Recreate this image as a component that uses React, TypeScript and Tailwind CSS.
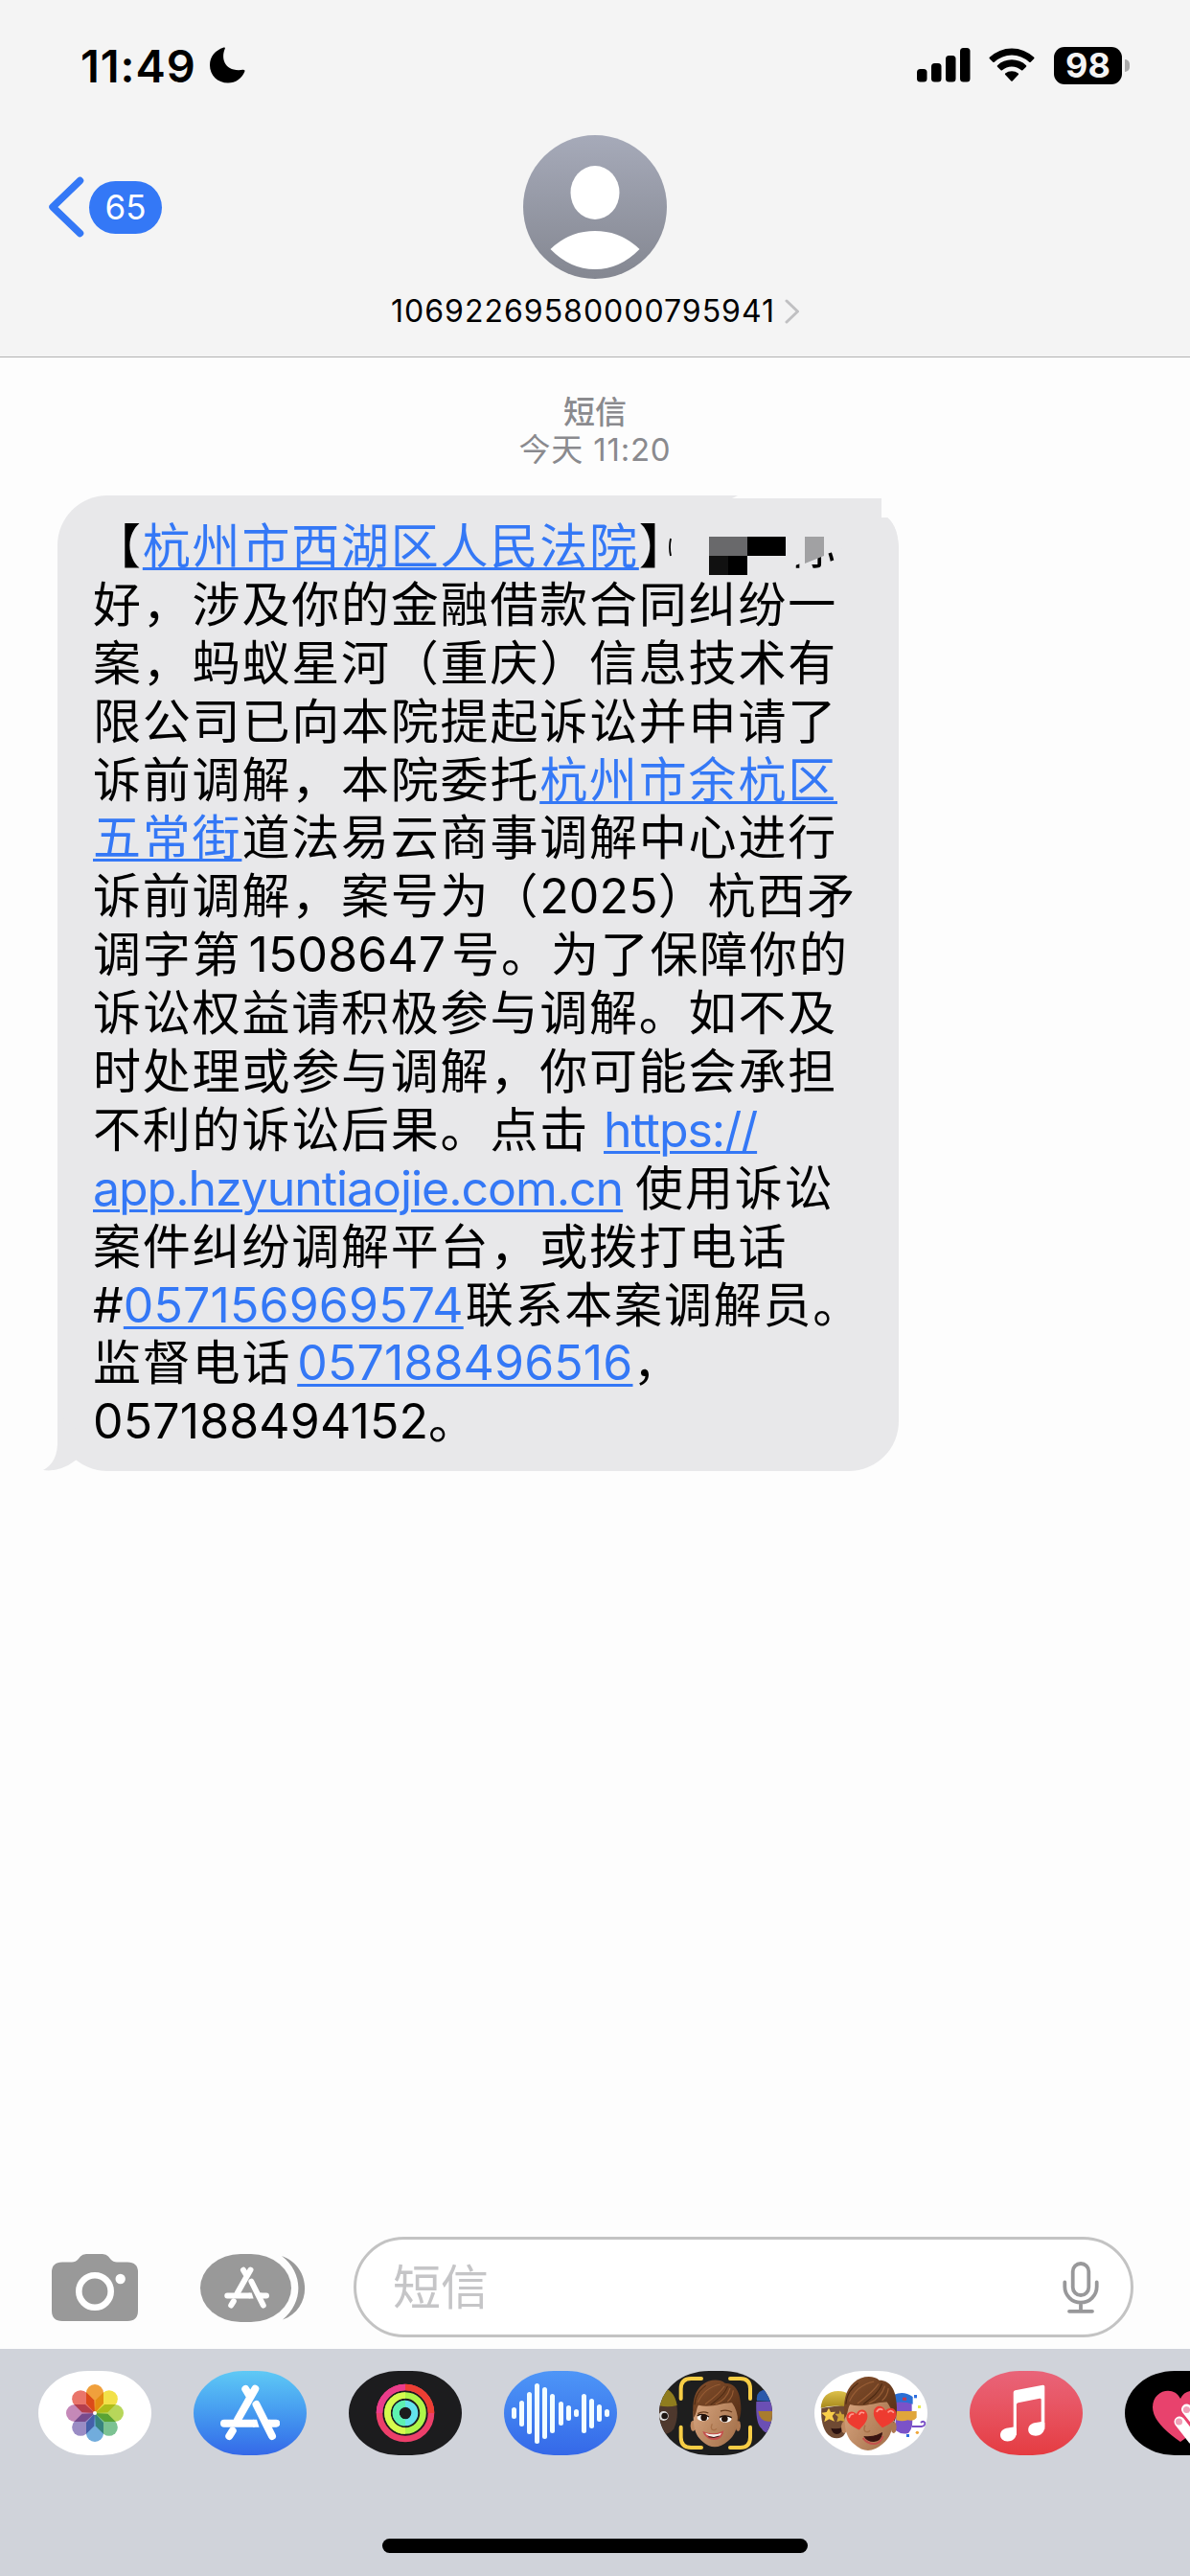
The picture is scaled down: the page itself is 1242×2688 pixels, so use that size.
import type { ReactNode } from "react";

type Segment = {
  text: string;
  kind?: "cjk" | "digits" | "url";
  link?: boolean;
  className?: string;
};

const tracking = {
  cjk: "tracking-[1.8px]",
  digits: "tracking-[0.15px]",
  url: "tracking-[-1.05px]",
};

const lines: Segment[][] = [
  [
    { text: "【" },
    { text: "杭州市西湖区人民法院", link: true },
    { text: "】" },
    { text: "你", className: "ml-[104px]" },
  ],
  [{ text: "好，涉及你的金融借款合同纠纷一" }],
  [{ text: "案，蚂蚁星河（重庆）信息技术有" }],
  [{ text: "限公司已向本院提起诉讼并申请了" }],
  [{ text: "诉前调解，本院委托" }, { text: "杭州市余杭区", link: true }],
  [{ text: "五常街", link: true }, { text: "道法易云商事调解中心进行" }],
  [
    { text: "诉前调解，案号为（" },
    { text: "2025", kind: "digits" },
    { text: "）杭西矛" },
  ],
  [
    { text: "调字第" },
    { text: "1508647", kind: "digits", className: "ml-[7px] mr-[6px]" },
    { text: "号。为了保障你的" },
  ],
  [{ text: "诉讼权益请积极参与调解。如不及" }],
  [{ text: "时处理或参与调解，你可能会承担" }],
  [
    { text: "不利的诉讼后果。点击" },
    { text: "https://", kind: "url", link: true, className: "ml-[15px]" },
  ],
  [
    { text: "app.hzyuntiaojie.com.cn", kind: "url", link: true },
    { text: "使用诉讼", className: "ml-[13px]" },
  ],
  [{ text: "案件纠纷调解平台，或拨打电话" }],
  [
    { text: "#", kind: "digits" },
    { text: "057156969574", kind: "digits", link: true },
    { text: "联系本案调解员。", className: "ml-[2px]" },
  ],
  [
    { text: "监督电话" },
    { text: "057188496516", kind: "digits", link: true, className: "ml-[6px]" },
    { text: "，" },
  ],
  [
    { text: "057188494152", kind: "digits" },
    { text: "。" },
  ],
];

const waveHeights = [12, 27, 44, 63, 54, 41, 25, 16, 8, 41, 31, 18, 8];

const petals = [
  "#f0a03c",
  "#f2e149",
  "#b7d65a",
  "#7cc292",
  "#71acdc",
  "#9a8cc4",
  "#c589b8",
  "#e9756a",
];

function StatusBar() {
  return (
    <div className="flex h-[136px] items-center justify-between pl-[84px] pr-[63px]">
      <div className="flex items-center">
        <span className="text-[47px] font-semibold leading-none tracking-[0.9px]">11:49</span>
        <svg className="ml-[14px] h-[38px] w-[37px]" viewBox="0 0 37 38">
          <path d="M14.5 0.6C15.6 0.2 16.2 1 15.7 2C11.2 12.500 16 26.500 34.500 23.800C36 23.600 36.800 24.500 36.300 25.800C33.500 33 27 37.500 19 37.500C8 37.500 0 29.500 0 19C0 10.500 5.500 3.500 14.500 0.600Z" />
        </svg>
      </div>
      <div className="flex items-center">
        <svg className="h-[36px] w-[56px]" viewBox="0 0 56 36">
          <rect x="0" y="22" width="10.500" height="13.500" rx="3.500" />
          <rect x="15" y="16" width="10.500" height="19.500" rx="3.500" />
          <rect x="30" y="8" width="10.500" height="27.500" rx="3.500" />
          <rect x="45" y="0" width="10.500" height="35.500" rx="3.500" />
        </svg>
        <svg className="ml-[19px] h-[36px] w-[48px]" viewBox="0 0 48 36">
          <path d="M0.800 9.800A33.500 33.500 0 0 1 47.200 9.800Q47.800 10.500 47.200 11.200L43.700 14.700Q43 15.300 42.200 14.700A26.800 26.800 0 0 0 5.800 14.700Q5 15.300 4.300 14.700L0.800 11.200Q0.200 10.500 0.800 9.800Z" />
          <path d="M9 18.200A22 22 0 0 1 39 18.200Q39.700 19 39 19.700L35.400 23.200Q34.700 23.800 34 23.200A15 15 0 0 0 14 23.200Q13.300 23.800 12.600 23.200L9 19.700Q8.300 19 9 18.200Z" />
          <path d="M17.200 26.600A11 11 0 0 1 30.800 26.600Q31.500 27.300 30.800 28L24.700 34.500Q24 35.200 23.300 34.500L17.200 28Q16.500 27.300 17.200 26.600Z" />
        </svg>
        <div className="ml-[20px] flex h-[39px] w-[71px] items-center justify-center rounded-[11px] bg-black text-[36px] font-bold leading-none text-[#f4f4f4]">
          98
        </div>
        <div className="ml-[3px] h-[13px] w-[5px] rounded-r-full bg-[#aaaaaa]" />
      </div>
    </div>
  );
}

function Avatar() {
  return (
    <svg className="size-[150px]" viewBox="0 0 150 150">
      <defs>
        <linearGradient id="avatar" x1="0" y1="0" x2="0" y2="1">
          <stop offset="0" stopColor="#a6aab9" />
          <stop offset="1" stopColor="#848791" />
        </linearGradient>
      </defs>
      <circle cx="75" cy="75" r="75" fill="url(#avatar)" />
      <ellipse cx="75" cy="60" rx="25.500" ry="28" fill="#fff" />
      <path d="M28.500 119Q48 100 75 100Q102 100 121.500 119Q101 140 75 140Q49 140 28.500 119Z" fill="#fff" />
    </svg>
  );
}

function Header() {
  return (
    <header className="h-[373px] border-b border-[#b2b2b2] bg-[#f4f4f4]">
      <StatusBar />
      <div className="grid grid-cols-3 pt-[5px]">
        <div className="flex h-[150px] items-center pl-[50px]">
          <svg className="h-[64px] w-[38px]" viewBox="0 0 38 64" fill="none">
            <path d="M33.500 4.500L5 32L33.500 59.500" stroke="#3478f6" strokeWidth="7.500" strokeLinecap="round" strokeLinejoin="round" />
          </svg>
          <span className="ml-[5px] flex h-[55px] w-[76px] items-center justify-center rounded-full bg-[#3478f6] text-[35px] leading-none text-white">
            65
          </span>
        </div>
        <div className="flex flex-col items-center">
          <Avatar />
          <div className="mt-[18px] flex items-center whitespace-nowrap pl-[1px]">
            <span className="text-[32px] leading-[32px] tracking-[1px]">10692269580000795941</span>
            <svg className="ml-[10px] h-[28px] w-[16px]" viewBox="0 0 16 28" fill="none">
              <path d="M2 3L13.500 14L2 25" stroke="#c0c0c2" strokeWidth="3" strokeLinecap="round" strokeLinejoin="round" />
            </svg>
          </div>
        </div>
      </div>
    </header>
  );
}

// Pixelated patch and smudge over the recipient's name
function Redaction() {
  return (
    <svg className="absolute left-[634px] top-[-10px] h-[124px] w-[254px]" viewBox="694 507 254 124">
      <path d="M764 520L772 516V507H948V640H938V575Q938 550 926 540H920V520Z" fill="#fdfdfd" />
      <path d="M764 520H920V540H926Q938 550 938 575V600H882V560H764Z" fill="#e8e8ea" />
      <path d="M701 530H880V572L830 590V606H701Z" fill="#e8e8ea" />
      <path d="M700 562Q698 571 700 580" stroke="#000" strokeWidth="1.800" fill="none" />
      <path d="M740 560H780V580H740Z" fill="#69696b" />
      <path d="M780 560H820V580H780Z" fill="#000" />
      <path d="M740 580H760V600H740Z" fill="#111" />
      <path d="M760 580H780V600H760Z" fill="#000" />
      <path d="M840 560H860V580L840 588Z" fill="#a1a1a3" />
    </svg>
  );
}

function Bubble() {
  return (
    <div className="relative ml-[60px] mt-[28px] h-[1017.5px] w-[878px] rounded-[52px] bg-[#e8e8ea] pl-[37px] pt-[23px]">
      <svg className="absolute bottom-0 left-[-16px] h-[60px] w-[40px]" viewBox="0 0 40 60">
        <path d="M16 0V32Q15 52 1 59Q19 61.500 36 48L40 20Z" fill="#e8e8ea" />
      </svg>
      {lines.map((line, i) => (
        <div key={i} className="flex h-[60.9px] items-baseline whitespace-nowrap text-[50px] leading-[61px]">
          {line.map((seg) => (
            <span key={seg.text} className={seg.className}>
              <span
                className={`${tracking[seg.kind ?? "cjk"]} ${
                  seg.link ? "text-[#3478f6] underline decoration-[3px] underline-offset-[4px]" : ""
                }`}
              >
                {seg.text}
              </span>
            </span>
          ))}
        </div>
      ))}
      <Redaction />
    </div>
  );
}

function StoreMark({ className }: { className: string }) {
  return (
    <svg className={className} viewBox="28 13 62 60" fill="none" stroke="#fff" strokeWidth="8" strokeLinecap="round">
      <path d="M54.300 18L58.500 25M64.300 17.700L46 50" />
      <path d="M32 53.700H62M80 53.700H86.300" />
      <path d="M62 49.700H66L68.500 57.700H62Z" fill="#fff" stroke="none" />
      <path d="M74 49.700H80V57.700H79Z" fill="#fff" stroke="none" />
      <path d="M65.500 34L82 67" />
      <path d="M40.700 61.500L37.300 67" />
    </svg>
  );
}

function InputBar() {
  return (
    <div className="flex h-[117px] items-start pl-[54px]">
      <svg className="mt-[18px] h-[70px] w-[90px]" viewBox="0 0 90 70">
        <path d="M11 8.500H21Q25 8.500 27.500 5.500L30 2.500Q32 0 36 0H53Q57 0 59 2.500L61.500 5.500Q64 8.500 68 8.500H79Q90 8.500 90 19V59Q90 70 79 70H11Q0 70 0 59V19Q0 8.500 11 8.500Z" fill="#999" />
        <circle cx="45" cy="39" r="16.700" fill="none" stroke="#fff" strokeWidth="6.600" />
        <circle cx="71.700" cy="26" r="5.200" fill="#fff" />
      </svg>
      <div className="ml-[65px] mt-[18px] flex">
        <div className="flex h-[71px] w-[95px] items-center justify-center rounded-[42px/35.5px] bg-[#999]">
          <StoreMark className="ml-[1px] h-[45px] w-[47px]" />
        </div>
        <svg className="ml-[-10px] h-[71px] w-[25px]" viewBox="0 0 25 71">
          <path d="M0 2C32 13 32 58 1 68.500C23 50 23 20 0 2Z" fill="#999" />
        </svg>
      </div>
      <div className="ml-[50px] flex h-[105px] w-[814px] items-center justify-between rounded-full border-[3px] border-[#c3c3c3] bg-white pl-[38px] pr-[33px]">
        <span className="text-[50px] leading-none text-[#c5c5c7]">短信</span>
        <svg className="h-[54px] w-[38px]" viewBox="0 0 38 54" fill="none" stroke="#98989a" strokeWidth="3.800" strokeLinecap="round">
          <rect x="10.700" y="2" width="16.600" height="33" rx="8.300" />
          <path d="M2.300 21.500V26A16.700 16.700 0 0 0 35.700 26V21.500M19 43V51.500M7 51.800H31" />
        </svg>
      </div>
    </div>
  );
}

function AppPill({ className, children }: { className?: string; children: ReactNode }) {
  return (
    <div className={`flex h-[88px] w-[118px] shrink-0 items-center justify-center overflow-hidden rounded-[52px/44px] ${className ?? ""}`}>
      {children}
    </div>
  );
}

function PhotosIcon() {
  return (
    <svg className="size-[64px] isolate" viewBox="-32 -32 64 64">
      {petals.map((color, i) => (
        <path
          key={color}
          d="M0 0L-9 -10V-21A9 9 0 0 1 9 -21V-10Z"
          fill={color}
          transform={`rotate(${i * 45})`}
          className="mix-blend-multiply"
        />
      ))}
      <circle r="2" fill="#fff" />
    </svg>
  );
}

function RingsIcon() {
  return (
    <svg className="size-[62px]" viewBox="-31 -31 62 62" fill="none">
      <circle r="27" stroke="#ec3f6a" strokeWidth="6.600" />
      <path d="M0 -27A27 27 0 0 0 -27 0" stroke="#ea3c8b" strokeWidth="6.600" />
      <path d="M0 -27A27 27 0 0 1 27 0" stroke="#ec3f33" strokeWidth="6.600" />
      <circle r="18.500" stroke="#aef649" strokeWidth="6.600" />
      <path d="M0 -18.500A18.500 18.500 0 0 0 0 18.500" stroke="#d6fb4e" strokeWidth="6.600" />
      <circle r="9.800" stroke="#63e3ec" strokeWidth="7" />
      <path d="M0 -9.800A9.800 9.800 0 0 0 0 9.800" stroke="#5df2b0" strokeWidth="7" />
    </svg>
  );
}

function HairAndFace() {
  return (
    <>
      <ellipse cx="130" cy="196" rx="8" ry="17" fill="#c08a62" />
      <ellipse cx="271" cy="196" rx="8" ry="17" fill="#ad7750" />
      <path d="M131 150C130 195 134 225 160 245Q198 280 240 243C268 220 271 190 270 140Q230 90 160 110Z" fill="url(#skin)" />
      <path d="M131 172C127 125 132 90 158 68C180 48 215 48 230 62C262 62 275 90 278 118C283 150 278 170 271 184C270 160 264 140 252 124C225 122 185 142 147 131C140 140 142 158 131 172Z" fill="url(#hair)" />
      <path d="M145 122C160 90 185 72 215 66M168 128C190 112 215 92 228 72M200 128C225 118 240 98 246 78M238 120C250 110 255 95 256 85" stroke="#965c34" strokeWidth="3.500" fill="none" />
      <path d="M135 130C138 100 150 85 170 70M185 130C212 110 230 95 238 72" stroke="#4a2811" strokeWidth="3" fill="none" />
      <path d="M190 190Q183 206 193 209Q202 210 203 204" stroke="#a87149" strokeWidth="4" fill="none" />
    </>
  );
}

function FaceGradients() {
  return (
    <defs>
      <linearGradient id="skin" x1="0" y1="0" x2="1" y2="0.6">
        <stop offset="0" stopColor="#d9a680" />
        <stop offset="1" stopColor="#a8754f" />
      </linearGradient>
      <linearGradient id="hair" x1="0" y1="0" x2="1" y2="1">
        <stop offset="0" stopColor="#85502c" />
        <stop offset="1" stopColor="#552e16" />
      </linearGradient>
      <linearGradient id="hat" x1="0" y1="0" x2="0" y2="1">
        <stop offset="0" stopColor="#dcc04a" />
        <stop offset="1" stopColor="#a8891c" />
      </linearGradient>
    </defs>
  );
}

function MemojiIcon() {
  return (
    <svg className="h-[88px] w-[118px]" viewBox="24 24 354 264">
      <FaceGradients />
      <path d="M20 125H78Q86 170 70 205Q58 225 20 225Z" fill="#4e382d" />
      <path d="M20 75Q70 75 80 132Q50 140 20 132Z" fill="#8f7c1e" />
      <circle cx="38" cy="165" r="15" fill="#ddd" />
      <circle cx="41" cy="165" r="10" fill="#1c1410" />
      <path d="M328 120Q325 190 345 205Q350 220 380 220V120Z" fill="#6b4fb4" />
      <path d="M330 118Q325 85 360 82H380V120Z" fill="#2a59ab" />
      <path d="M334 150H380V180Q340 190 334 150Z" fill="#a87c2e" />
      <path d="M92 111V80Q92 48 124 48H156M246 48H278Q309 48 309 80V111M309 200V232Q309 264 278 264H246M156 264H124Q92 264 92 232V200" stroke="#f7cd45" strokeWidth="12" strokeLinecap="round" fill="none" />
      <HairAndFace />
      <path d="M145 158Q160 148 178 156M216 150Q235 144 252 153" stroke="#6a3d1e" strokeWidth="4" fill="none" />
      <ellipse cx="161" cy="171" rx="18" ry="10" fill="#fff" />
      <ellipse cx="232" cy="175" rx="18" ry="10" fill="#fff" />
      <circle cx="164" cy="170" r="10" fill="#24130b" />
      <circle cx="229" cy="174" r="10" fill="#24130b" />
      <path d="M143 164Q161 155 180 168M213 169Q232 160 251 170" stroke="#1c0e08" strokeWidth="4" fill="none" />
      <path d="M160 213Q195 228 226 211Q222 240 195 240Q168 238 160 213Z" fill="#c5504d" />
      <path d="M168 218Q195 228 219 218Q214 232 195 232Q176 230 168 218Z" fill="#f4eee8" />
      <path d="M178 230Q195 236 212 228" stroke="#3a1512" strokeWidth="3" fill="none" />
    </svg>
  );
}

function Heart({ transform }: { transform: string }) {
  return (
    <g transform={transform}>
      <path d="M0 32C-16 20 -33 8 -33 -10C-33 -30 -10 -36 0 -18C10 -36 33 -30 33 -10C33 8 16 20 0 32Z" fill="#ee3b30" />
      <path d="M-24 -12Q-20 -23 -10 -20M9 -16Q14 -24 23 -18" stroke="#ff9b8f" strokeWidth="5" strokeLinecap="round" fill="none" />
    </g>
  );
}

function StickersIcon() {
  return (
    <svg className="h-[88px] w-[118px]" viewBox="510 24 354 264">
      <path d="M532 140C528 190 545 235 580 235C600 235 612 220 612 190V130Z" fill="#6f4a33" />
      <path d="M530 140Q534 88 585 87Q605 87 612 95V135Q570 130 530 140Z" fill="url(#hat)" />
      <path d="M555 140L561 153L576 152L566 165L573 182L556 175L541 184L545 167L532 155L548 153Z" fill="#f9cf4b" />
      <path d="M590 148L596 160L610 160L602 171L607 184L592 179L580 184L584 168L574 158L587 158Z" fill="#cda436" />
      <path d="M562 203Q580 208 598 201Q596 222 580 222Q566 220 562 203Z" fill="#2a1210" />
      <path d="M764 115H815V165Q822 200 805 218Q785 226 764 210Z" fill="#7b52c8" />
      <path d="M760 98Q790 85 818 105V128Q790 118 760 124Z" fill="#2b6fd4" />
      <path d="M766 150H830V170Q822 182 802 178Q785 184 766 178Z" fill="#e0a63b" />
      <path d="M786 112H798" stroke="#c33750" strokeWidth="9" />
      <path d="M815 198H845Q858 196 856 186Q850 178 843 186" stroke="#7a4fc6" strokeWidth="6" fill="none" />
      <rect x="822" y="99" width="9" height="10" fill="#2f6fe0" />
      <rect x="834" y="132" width="9" height="9" fill="#e8ea4e" />
      <rect x="798" y="222" width="9" height="9" fill="#2f6fe0" />
      <circle cx="832" cy="217" r="5" fill="#f0a63a" />
      <g transform="translate(460 -15) scale(1.100)">
        <HairAndFace />
      </g>
      <path d="M664 228Q695 232 723 216Q722 244 696 246Q674 246 664 228Z" fill="#3a1411" />
      <path d="M662 234Q680 256 704 251Q720 246 724 228" stroke="#c3514c" strokeWidth="6" fill="none" />
      <Heart transform="translate(645 177) rotate(-10)" />
      <Heart transform="translate(729 168) rotate(10) scale(1.080)" />
    </svg>
  );
}

function MusicIcon() {
  return (
    <svg className="h-[88px] w-[118px]" viewBox="0 0 118 88" fill="#fff">
      <path d="M45.700 22.500Q45.700 20.700 47.500 20.300L76.500 14.700Q78.300 14.500 78.300 16.300V61H74.700V30Q74.700 28.500 73 28.800L50.500 33.300Q48.900 33.700 48.900 35V67H45.700Z" />
      <path d="M48.900 60V64C48.900 70 45 73.500 39.500 73.500C35 73.500 32 70.500 32 67C32 62.500 35.500 60 40 59.500L46 58.500Z" />
      <path d="M78.300 54V58C78.300 64 74.500 67.700 69 67.700C64.300 67.700 61.200 65 61.200 61.500C61.200 57 64.500 54.500 69 54L75 53Z" />
    </svg>
  );
}

function TouchIcon() {
  return (
    <svg className="h-[88px] w-[118px]" viewBox="0 0 118 88">
      <path d="M58 74Q29 54 29 38C29 19 52 15 58 29C64 15 87 19 87 38Q87 54 58 74Z" fill="#e8426d" />
      <path d="M57 53L71 71M64.500 40L82 62" stroke="#fff" strokeWidth="11" strokeLinecap="round" />
      <circle cx="56.500" cy="53" r="3.600" fill="#f0a0b8" />
      <circle cx="64.500" cy="40.500" r="3.600" fill="#f0a0b8" />
    </svg>
  );
}

function AppDrawer() {
  return (
    <div className="flex h-[237px] flex-col items-center justify-between overflow-hidden bg-[#d0d3da] pb-[24px] pt-[23px]">
      <div className="flex w-full gap-[44px] overflow-hidden pl-[40px]">
        <AppPill className="bg-white">
          <PhotosIcon />
        </AppPill>
        <AppPill className="bg-linear-to-b from-[#5fc9f5] to-[#3568e8]">
          <StoreMark className="h-[60px] w-[62px]" />
        </AppPill>
        <AppPill className="bg-[#1c1c1e]">
          <RingsIcon />
        </AppPill>
        <AppPill className="gap-[3.1px] bg-linear-to-b from-[#4e96f7] to-[#3568e8]">
          {waveHeights.map((height, i) => (
            <span key={i} className="w-[5px] shrink-0 rounded-full bg-[#f2fdff]" style={{ height }} />
          ))}
        </AppPill>
        <AppPill className="bg-[#1e1e1e]">
          <MemojiIcon />
        </AppPill>
        <AppPill className="bg-white">
          <StickersIcon />
        </AppPill>
        <AppPill className="bg-linear-to-b from-[#e96479] to-[#e53b41]">
          <MusicIcon />
        </AppPill>
        <AppPill className="bg-black">
          <TouchIcon />
        </AppPill>
      </div>
      <div className="h-[15px] w-[444px] rounded-full bg-black" />
    </div>
  );
}

export default function App() {
  return (
    <div className="flex h-[2688px] w-[1242px] flex-col overflow-hidden bg-[#fdfdfd] font-[Inter,'Noto_Sans_CJK_SC',sans-serif] text-black">
      <Header />
      <main className="flex-1">
        <div className="flex flex-col items-center pt-[38px] text-[33px] leading-[39px] text-[#8a8a8e]">
          <span className="font-medium">短信</span>
          <span className="whitespace-pre tracking-[0.8px]">今天 11:20</span>
        </div>
        <Bubble />
      </main>
      <InputBar />
      <AppDrawer />
    </div>
  );
}
